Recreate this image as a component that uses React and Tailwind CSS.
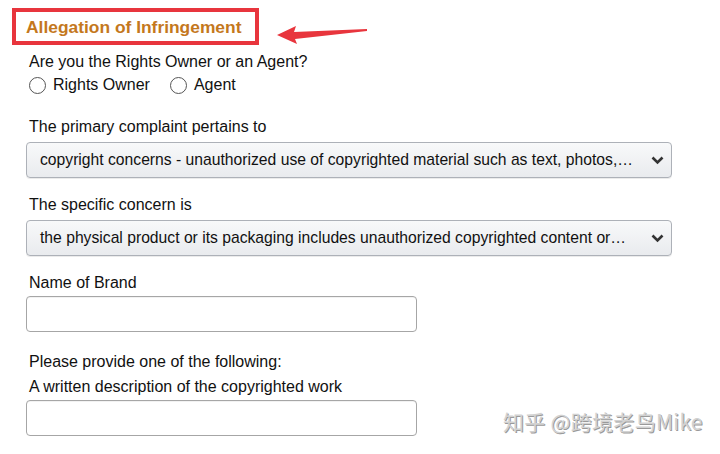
import React from "react";

const font = { fontFamily: "'Liberation Sans', Arial, sans-serif" };

function Chevron() {
  return (
    <svg width="13" height="9" viewBox="0 0 13 9" className="shrink-0">
      <path d="M1.5 1.5 L6.5 6.5 L11.5 1.5" fill="none" stroke="#333" strokeWidth="2.6" strokeLinejoin="miter" />
    </svg>
  );
}

function Select({ text }) {
  return (
    <div className="h-[36px] w-[646px] rounded-[4px] border border-[#adb1b8] bg-gradient-to-b from-[#f8f9fa] to-[#e9ebee] shadow-[0_1px_0_rgba(0,0,0,0.08)] flex items-center pl-[13px] pr-[7px] gap-[6px]">
      <span className="flex-1 text-[15.7px] text-[#111] whitespace-nowrap">{text}</span>
      <Chevron />
    </div>
  );
}

function Input() {
  return <div className="h-[36px] w-[391px] rounded-[4px] border border-[#a6a6a6] bg-white shadow-[inset_0_1px_0_rgba(0,0,0,0.05)]" />;
}

function Radio({ label }) {
  return (
    <label className="flex items-center gap-[7px]">
      <span className="w-[17px] h-[17px] rounded-full border border-[#555] bg-white" />
      <span>{label}</span>
    </label>
  );
}

export default function App() {
  return (
    <div className="relative w-[720px] h-[454px] bg-white overflow-hidden text-[16px] text-[#111] leading-[22px]" style={font}>
      <div className="pl-[26px] pt-[8px]">
        <div className="-ml-[14px] w-[247px] h-[37px] border-[4px] border-[#e8353d] flex items-center pl-[10px]">
          <span className="text-[17.4px] font-bold text-[#c4781d]">Allegation of Infringement</span>
        </div>

        <div className="pl-[3px] mt-[6px]">Are you the Rights Owner or an Agent?</div>
        <div className="pl-[3px] mt-[1px] flex items-center gap-[20px]">
          <Radio label="Rights Owner" />
          <Radio label="Agent" />
        </div>

        <div className="pl-[3px] mt-[20px] mb-[4px]">The primary complaint pertains to</div>
        <Select text="copyright concerns - unauthorized use of copyrighted material such as text, photos,…" />

        <div className="pl-[3px] mt-[16px] mb-[4px]">The specific concern is</div>
        <Select text="the physical product or its packaging includes unauthorized copyrighted content or…" />

        <div className="pl-[3px] mt-[16px] mb-[2px]">Name of Brand</div>
        <Input />

        <div className="pl-[3px] mt-[19px]">Please provide one of the following:</div>
        <div className="pl-[3px] mt-[3px] mb-[2px]">A written description of the copyrighted work</div>
        <Input />
      </div>

      <svg className="absolute left-[274px] top-[22px]" width="96" height="24" viewBox="0 0 96 24">
        <path d="M3 13 L22 4 L20 10 L93 7 L93 9 L21 17 L23 22 Z" fill="#e8353d" />
      </svg>

      <div
        className="absolute left-[503px] top-[410px] text-[21px] text-[#d2d2d2] tracking-[0.3px]"
        style={{ fontFamily: "'Noto Sans CJK SC', 'Liberation Sans', sans-serif", textShadow: "1px 1px 0 #9a9a9a, -1px -1px 0 #fff" }}
      >
        知乎 @跨境老鸟Mike
      </div>
    </div>
  );
}
